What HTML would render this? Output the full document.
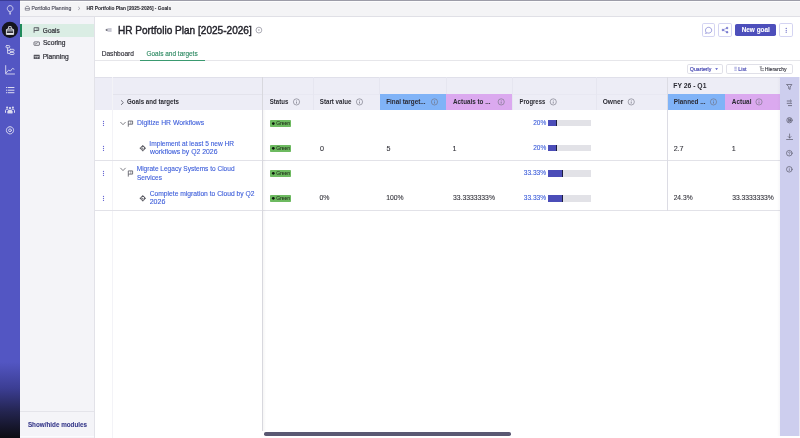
<!DOCTYPE html>
<html><head><meta charset="utf-8">
<style>
*{margin:0;padding:0;box-sizing:border-box}
html,body{width:800px;height:438px;overflow:hidden;background:#fff;font-family:"Liberation Sans",sans-serif;color:#2b2b33}
.a{position:absolute}
.t{position:absolute;white-space:nowrap;line-height:1;transform-origin:0 0}
svg.ov{position:absolute;left:0;top:0}
</style></head><body>
<div id="root" style="position:absolute;left:0;top:0;width:800px;height:438px;will-change:transform">
<div class="a" style="left:0px;top:0px;width:20px;height:438px;background:linear-gradient(to bottom,#5356c3 0,#5356c3 362px,#3c3e94 388px,#23244f 412px,#0c0c12 438px);"></div>
<div class="a" style="left:0px;top:0px;width:20px;height:1px;background:#3a3b96;"></div>
<div class="a" style="left:20px;top:0px;width:780px;height:17px;background:#f4f4f6;border-top:1px solid #9c9ca8;border-bottom:1px solid #e0e0e6"></div>
<div class="a" style="left:20px;top:1px;width:780px;height:1px;background:#fcfcfd;"></div>
<div class="a" style="left:20px;top:17px;width:75px;height:421px;background:#f4f4f8;border-right:1px solid #e2e2e8"></div>
<div class="a" style="left:20px;top:23.5px;width:74px;height:13.3px;background:#daede4;border-left:2px solid #1f8a5b"></div>
<div class="a" style="left:95px;top:17px;width:705px;height:421px;background:#fff;"></div>
<div class="t" style="left:31px;top:6.00px;padding-left:0.395px;font-size:5.31px;color:#50505e;transform:scaleX(0.961);-webkit-text-stroke:0.15px #50505e;">Portfolio Planning</div>
<div class="t" style="left:86px;top:6.00px;padding-left:0.515px;font-size:5.23px;font-weight:bold;color:#25252d;transform:scaleX(0.921);-webkit-text-stroke:0.05px #25252d;">HR Portfolio Plan [2025-2026] - Goals</div>
<div class="t" style="left:42px;top:27.00px;padding-left:0.989px;font-size:7.27px;color:#2e2e36;transform:scaleX(0.887);-webkit-text-stroke:0.2px #2e2e36;">Goals</div>
<div class="t" style="left:42px;top:40.00px;padding-left:0.921px;font-size:6.83px;color:#2e2e36;transform:scaleX(0.977);-webkit-text-stroke:0.2px #2e2e36;">Scoring</div>
<div class="t" style="left:42px;top:54.00px;padding-left:0.622px;font-size:6.40px;color:#2e2e36;transform:scaleX(1.044);-webkit-text-stroke:0.2px #2e2e36;">Planning</div>
<div class="a" style="left:20px;top:410.5px;width:74px;height:1px;background:#e4e4ea;"></div>
<div class="a" style="left:20px;top:436.4px;width:74px;height:1px;background:#fbfbfd;"></div>
<div class="t" style="left:27px;top:421.00px;padding-left:1.091px;font-size:7.56px;font-weight:bold;color:#37398a;transform:scaleX(0.835);-webkit-text-stroke:0.12px #37398a;">Show/hide modules</div>
<div class="t" style="left:117px;top:26.00px;padding-left:1.008px;font-size:10.47px;color:#25252d;transform:scaleX(0.962);-webkit-text-stroke:0.42px #25252d;">HR Portfolio Plan [2025-2026]</div>
<div class="t" style="left:101px;top:50.00px;padding-left:0.776px;font-size:7.85px;color:#2d2d35;transform:scaleX(0.843);-webkit-text-stroke:0.15px #2d2d35;">Dashboard</div>
<div class="t" style="left:146px;top:50.00px;padding-left:0.575px;font-size:7.85px;color:#2e8a63;transform:scaleX(0.827);-webkit-text-stroke:0.15px #2e8a63;">Goals and targets</div>
<div class="a" style="left:95px;top:60.3px;width:705px;height:1px;background:#e6e6ea;"></div>
<div class="a" style="left:140px;top:59.5px;width:64.6px;height:1.6px;background:#3a9a70;"></div>
<div class="a" style="left:702px;top:23.3px;width:13.3px;height:13.5px;background:#fff;border:0.7px solid #d4d4f2;border-radius:1.8px"></div>
<div class="a" style="left:718.3px;top:23.3px;width:13.6px;height:13.5px;background:#fff;border:0.7px solid #d4d4f2;border-radius:1.8px"></div>
<div class="a" style="left:779.3px;top:23.3px;width:13.5px;height:13.5px;background:#fff;border:0.7px solid #d4d4f2;border-radius:1.8px"></div>
<div class="a" style="left:735px;top:23.5px;width:41px;height:12.8px;background:#4d4fbb;border-radius:1.8px"></div>
<div class="t" style="left:741px;top:27.00px;padding-left:0.694px;font-size:6.69px;font-weight:bold;color:#ffffff;transform:scaleX(0.960);-webkit-text-stroke:0.1px #ffffff;">New goal</div>
<div class="a" style="left:686.7px;top:63.65px;width:36.2px;height:10.5px;background:#fff;border:0.7px solid #e0e0e8;border-radius:1.8px"></div>
<div class="a" style="left:726.2px;top:63.65px;width:66.4px;height:10.5px;background:#fff;border:0.7px solid #e0e0e8;border-radius:1.8px"></div>
<div class="t" style="left:689px;top:67.00px;padding-left:0.873px;font-size:5.38px;color:#4042b0;transform:scaleX(0.975);-webkit-text-stroke:0.15px #4042b0;">Quarterly</div>
<div class="t" style="left:738px;top:67.00px;padding-left:0.263px;font-size:5.38px;color:#4042b0;transform:scaleX(0.990);-webkit-text-stroke:0.15px #4042b0;">List</div>
<div class="t" style="left:764px;top:67.00px;padding-left:0.705px;font-size:5.38px;color:#3a3a44;transform:scaleX(0.957);-webkit-text-stroke:0.15px #3a3a44;">Hierarchy</div>
<div class="a" style="left:95px;top:77px;width:685px;height:33px;background:#ededf6;border-top:0.6px solid #e0e0ea"></div>
<div class="a" style="left:112.2px;top:93.6px;width:150px;height:0.8px;background:#e3e3ec;"></div>
<div class="a" style="left:262.5px;top:93.6px;width:517.5px;height:0.7px;background:#e8e8f2;"></div>
<div class="a" style="left:262.2px;top:77px;width:0.7px;height:33px;background:#e6e6f0;"></div>
<div class="t" style="left:269px;top:98.00px;padding-left:0.981px;font-size:7.27px;font-weight:bold;color:#2a2a32;transform:scaleX(0.834);">Status</div>
<div class="a" style="left:313.0px;top:77px;width:0.7px;height:33px;background:#e6e6f0;"></div>
<div class="t" style="left:319px;top:98.00px;padding-left:0.956px;font-size:7.27px;font-weight:bold;color:#2a2a32;transform:scaleX(0.851);">Start value</div>
<div class="a" style="left:379.7px;top:94px;width:66.6px;height:16px;background:#80b3f7;"></div>
<div class="a" style="left:379.4px;top:77px;width:0.7px;height:16.5px;background:#e6e6f0;"></div>
<div class="t" style="left:386px;top:98.00px;padding-left:0.255px;font-size:7.27px;font-weight:bold;color:#2a2a32;transform:scaleX(0.871);">Final target...</div>
<div class="a" style="left:446.3px;top:94px;width:66.3px;height:16px;background:#dba9ef;"></div>
<div class="a" style="left:446.0px;top:77px;width:0.7px;height:16.5px;background:#e6e6f0;"></div>
<div class="t" style="left:453px;top:98.00px;padding-left:0.049px;font-size:7.27px;font-weight:bold;color:#2a2a32;transform:scaleX(0.865);">Actuals to ...</div>
<div class="a" style="left:512.3px;top:77px;width:0.7px;height:33px;background:#e6e6f0;"></div>
<div class="t" style="left:519px;top:98.00px;padding-left:0.738px;font-size:7.27px;font-weight:bold;color:#2a2a32;transform:scaleX(0.814);">Progress</div>
<div class="a" style="left:595.9px;top:77px;width:0.7px;height:33px;background:#e6e6f0;"></div>
<div class="t" style="left:602px;top:98.00px;padding-left:0.807px;font-size:7.27px;font-weight:bold;color:#2a2a32;transform:scaleX(0.911);">Owner</div>
<div class="a" style="left:667px;top:94px;width:58px;height:16px;background:#80b3f7;"></div>
<div class="a" style="left:666.7px;top:77px;width:0.7px;height:16.5px;background:#e6e6f0;"></div>
<div class="t" style="left:673px;top:98.00px;padding-left:0.947px;font-size:7.27px;font-weight:bold;color:#2a2a32;transform:scaleX(0.870);">Planned ...</div>
<div class="a" style="left:725px;top:94px;width:55px;height:16px;background:#dba9ef;"></div>
<div class="t" style="left:731px;top:98.00px;padding-left:0.951px;font-size:7.27px;font-weight:bold;color:#2a2a32;transform:scaleX(0.883);">Actual</div>
<div class="a" style="left:112px;top:77px;width:0.7px;height:361px;background:#f3f3f7;"></div>
<div class="t" style="left:127px;top:98.00px;padding-left:0.004px;font-size:7.27px;font-weight:bold;color:#2a2a32;transform:scaleX(0.847);">Goals and targets</div>
<div class="t" style="left:673px;top:82.00px;padding-left:0.311px;font-size:7.27px;font-weight:bold;color:#2a2a32;transform:scaleX(0.936);">FY 26 - Q1</div>
<div class="a" style="left:95px;top:160px;width:685px;height:0.8px;background:#e2e2e8;"></div>
<div class="a" style="left:95px;top:210.2px;width:685px;height:0.8px;background:#e2e2e8;"></div>
<div class="a" style="left:666.7px;top:77px;width:0.8px;height:134px;background:#dcdce4;"></div>
<div class="a" style="left:261.9px;top:77px;width:1px;height:353.5px;background:#d8d8de;"></div>
<div class="a" style="left:262.9px;top:110px;width:3px;height:320.5px;background:linear-gradient(to right,rgba(0,0,0,0.04),rgba(0,0,0,0));"></div>
<div class="t" style="left:137px;top:119.00px;padding-left:0.042px;font-size:7.41px;color:#3a5bd9;transform:scaleX(0.918);-webkit-text-stroke:0.1px #3a5bd9;">Digitize HR Workflows</div>
<div class="t" style="left:149px;top:141.00px;padding-left:0.405px;font-size:6.90px;color:#3a5bd9;transform:scaleX(0.958);-webkit-text-stroke:0.1px #3a5bd9;">Implement at least 5 new HR</div>
<div class="t" style="left:150px;top:148.00px;padding-left:0.017px;font-size:6.98px;color:#3a5bd9;transform:scaleX(0.984);-webkit-text-stroke:0.1px #3a5bd9;">workflows by Q2 2026</div>
<div class="t" style="left:136px;top:165.00px;padding-left:0.755px;font-size:6.98px;color:#3a5bd9;transform:scaleX(0.939);-webkit-text-stroke:0.1px #3a5bd9;">Migrate Legacy Systems to Cloud</div>
<div class="t" style="left:136px;top:175.00px;padding-left:1.004px;font-size:6.83px;color:#3a5bd9;transform:scaleX(0.953);-webkit-text-stroke:0.1px #3a5bd9;">Services</div>
<div class="t" style="left:149px;top:191.00px;padding-left:0.676px;font-size:6.83px;color:#3a5bd9;transform:scaleX(0.983);-webkit-text-stroke:0.1px #3a5bd9;">Complete migration to Cloud by Q2</div>
<div class="t" style="left:149px;top:199.00px;padding-left:0.633px;font-size:6.88px;color:#3a5bd9;transform:scaleX(1.024);-webkit-text-stroke:0.1px #3a5bd9;">2026</div>
<div class="a" style="left:269.8px;top:120.2px;width:21.7px;height:6.6px;background:#6dba60;border-radius:0.8px"></div>
<div class="t" style="left:276px;top:121.00px;padding-left:0.152px;font-size:5.23px;color:#24301f;transform:scaleX(0.968);-webkit-text-stroke:0.05px #24301f;">Green</div>
<div class="a" style="left:269.8px;top:145.0px;width:21.7px;height:6.6px;background:#6dba60;border-radius:0.8px"></div>
<div class="t" style="left:276px;top:146.00px;padding-left:0.152px;font-size:5.23px;color:#24301f;transform:scaleX(0.968);-webkit-text-stroke:0.05px #24301f;">Green</div>
<div class="a" style="left:269.8px;top:170.0px;width:21.7px;height:6.6px;background:#6dba60;border-radius:0.8px"></div>
<div class="t" style="left:276px;top:171.00px;padding-left:0.152px;font-size:5.23px;color:#24301f;transform:scaleX(0.968);-webkit-text-stroke:0.05px #24301f;">Green</div>
<div class="a" style="left:269.8px;top:195.0px;width:21.7px;height:6.6px;background:#6dba60;border-radius:0.8px"></div>
<div class="t" style="left:276px;top:196.00px;padding-left:0.152px;font-size:5.23px;color:#24301f;transform:scaleX(0.968);-webkit-text-stroke:0.05px #24301f;">Green</div>
<div class="t" style="left:319.88px;top:146.00px;font-size:7.16px;color:#33333b;-webkit-text-stroke:0.1px #33333b;">0</div>
<div class="t" style="left:386.59px;top:146.00px;font-size:7.16px;color:#33333b;-webkit-text-stroke:0.1px #33333b;">5</div>
<div class="t" style="left:452.51px;top:146.00px;font-size:7.16px;color:#33333b;-webkit-text-stroke:0.1px #33333b;">1</div>
<div class="t" style="left:673.64px;top:146.00px;font-size:7.16px;color:#33333b;-webkit-text-stroke:0.1px #33333b;">2.7</div>
<div class="t" style="left:731.81px;top:146.00px;font-size:7.16px;color:#33333b;-webkit-text-stroke:0.1px #33333b;">1</div>
<div class="t" style="left:319px;top:194.00px;padding-left:0.498px;font-size:7.31px;color:#33333b;transform:scaleX(0.949);-webkit-text-stroke:0.1px #33333b;">0%</div>
<div class="t" style="left:386px;top:194.00px;padding-left:0.202px;font-size:7.31px;color:#33333b;transform:scaleX(0.934);-webkit-text-stroke:0.1px #33333b;">100%</div>
<div class="t" style="left:452px;top:194.00px;padding-left:1.012px;font-size:7.31px;color:#33333b;transform:scaleX(0.933);-webkit-text-stroke:0.1px #33333b;">33.3333333%</div>
<div class="t" style="left:673px;top:194.00px;padding-left:0.728px;font-size:7.31px;color:#33333b;transform:scaleX(0.915);-webkit-text-stroke:0.1px #33333b;">24.3%</div>
<div class="t" style="left:732px;top:194.00px;padding-left:0.267px;font-size:7.31px;color:#33333b;transform:scaleX(0.924);-webkit-text-stroke:0.1px #33333b;">33.3333333%</div>
<div class="t" style="left:533px;top:120.00px;padding-left:0.189px;font-size:7.09px;color:#3a5bd9;transform:scaleX(0.919);-webkit-text-stroke:0.1px #3a5bd9;">20%</div>
<div class="a" style="left:548px;top:119.8px;width:43px;height:6.7px;background:#e2e2e7;"></div>
<div class="a" style="left:548px;top:119.8px;width:9px;height:6.7px;background:#4b4db8;border-right:0.8px solid #1d1d40"></div>
<div class="t" style="left:533px;top:145.00px;padding-left:0.189px;font-size:7.09px;color:#3a5bd9;transform:scaleX(0.919);-webkit-text-stroke:0.1px #3a5bd9;">20%</div>
<div class="a" style="left:548px;top:144.8px;width:43px;height:6.7px;background:#e2e2e7;"></div>
<div class="a" style="left:548px;top:144.8px;width:9px;height:6.7px;background:#4b4db8;border-right:0.8px solid #1d1d40"></div>
<div class="t" style="left:523px;top:170.00px;padding-left:0.804px;font-size:7.09px;color:#3a5bd9;transform:scaleX(0.934);-webkit-text-stroke:0.1px #3a5bd9;">33.33%</div>
<div class="a" style="left:548px;top:169.9px;width:43px;height:6.7px;background:#e2e2e7;"></div>
<div class="a" style="left:548px;top:169.9px;width:15px;height:6.7px;background:#4b4db8;border-right:0.8px solid #1d1d40"></div>
<div class="t" style="left:523px;top:195.00px;padding-left:0.804px;font-size:7.09px;color:#3a5bd9;transform:scaleX(0.934);-webkit-text-stroke:0.1px #3a5bd9;">33.33%</div>
<div class="a" style="left:548px;top:194.9px;width:43px;height:6.7px;background:#e2e2e7;"></div>
<div class="a" style="left:548px;top:194.9px;width:15px;height:6.7px;background:#4b4db8;border-right:0.8px solid #1d1d40"></div>
<div class="a" style="left:777px;top:77.3px;width:3px;height:358.5px;background:linear-gradient(to right,rgba(120,120,150,0),rgba(120,120,150,0.06));"></div>
<div class="a" style="left:780px;top:77.3px;width:19.2px;height:358.5px;background:#cdceee;"></div>
<div class="a" style="left:799.2px;top:77.3px;width:0.8px;height:358.5px;background:#e8e8f4;"></div>
<div class="a" style="left:263.7px;top:432.2px;width:247.2px;height:3.6px;background:#5a5872;border-radius:1.8px"></div>
<svg class="ov" width="800" height="438" viewBox="0 0 800 438" fill="none">
<path d="M25.3 10.2 V7.7 L26.4 6.3 H28.3 L29.4 7.7 V10.2 Z M25.3 8.5 H29.4" stroke="#6a6a78" stroke-width="0.7"/>
<path d="M78.2 6.9 L79.9 8.4 L78.2 9.9" stroke="#777784" stroke-width="0.6"/>
<g stroke="#44444c">
  <path d="M34.1 32.8 V27.7 H38.7 V30.5 H34.1" stroke-width="0.8"/>
  <path d="M37.1 27.7 V30.5" stroke-width="0.5"/>
  <rect x="34" y="41.9" width="5.4" height="3.4" rx="0.5" stroke-width="0.75" stroke="#4a4a54"/>
  <path d="M35.1 43.5 L36 44.2 L37.7 42.5" stroke-width="0.65" stroke="#4a4a54"/>
  <rect x="33.7" y="54.8" width="6" height="4.3" rx="0.3" fill="#55555e" stroke="none"/>
  <path d="M34.4 56.5 H39 M35.8 56.5 V58.4 M37.6 56.5 V58.4" stroke="#f4f4f7" stroke-width="0.5"/>
</g>
<path d="M107.3 28.9 L105.7 29.9 L107.3 31 Z" fill="#50505e" stroke="#50505e" stroke-width="0.5" stroke-linejoin="round"/>
<rect x="107.7" y="28.1" width="4" height="3.8" fill="#d0d0da"/>
<path d="M109 28.1 V31.9 M110.4 28.1 V31.9" stroke="#babac6" stroke-width="0.4"/>
<g stroke="#80808e" stroke-width="0.65"><circle cx="258.9" cy="30.1" r="2.9"/><circle cx="258.9" cy="30.1" r="0.75" fill="#9a9aa6" stroke="none"/></g>
<g stroke="#6e70cc" stroke-width="0.65" stroke-linejoin="round">
  <path d="M706.1 32.4 L705.5 33.4 L707.3 32.9 C707.7 33.1 708.1 33.1 708.6 33.1 C710.4 33.1 711.7 31.8 711.7 30.2 C711.7 28.6 710.4 27.3 708.6 27.3 C706.8 27.3 705.5 28.6 705.5 30.2 C705.5 31 705.7 31.8 706.1 32.4 Z"/>
  <circle cx="722.9" cy="30" r="0.85" fill="#6e70cc"/><circle cx="727.1" cy="28" r="0.85" fill="#6e70cc"/><circle cx="727.1" cy="32.2" r="0.85" fill="#6e70cc"/>
  <path d="M723.4 29.7 L726.6 28.2 M723.4 30.3 L726.6 31.9" stroke-width="0.55"/>
</g>
<g fill="#5a5cc0"><circle cx="786.2" cy="28.4" r="0.6"/><circle cx="786.2" cy="30.3" r="0.6"/><circle cx="786.2" cy="32.2" r="0.6"/></g>
<path d="M715.2 68.2 H718 L716.6 70 Z" fill="#4a4cc0"/>
<path d="M734.3 67.3 H736.8 M734.3 68.8 H736.8 M734.3 70.3 H736.8" stroke="#6a6cc8" stroke-width="0.55"/>
<path d="M759.6 66.8 H762 M760.8 66.8 V70.6 H764 M760.8 68.7 H764" stroke="#44444e" stroke-width="0.55"/>
<g stroke="#6e6e7c" stroke-width="0.6"><circle cx="296.5" cy="101.9" r="3.1"/><path d="M296.5 101.5 V103.6" stroke-width="0.7"/><circle cx="296.5" cy="100.4" r="0.4" fill="#6e6e7c" stroke="none"/></g>
<g stroke="#6e6e7c" stroke-width="0.6"><circle cx="359.5" cy="101.9" r="3.1"/><path d="M359.5 101.5 V103.6" stroke-width="0.7"/><circle cx="359.5" cy="100.4" r="0.4" fill="#6e6e7c" stroke="none"/></g>
<g stroke="#6e6e7c" stroke-width="0.6"><circle cx="434.5" cy="101.9" r="3.1"/><path d="M434.5 101.5 V103.6" stroke-width="0.7"/><circle cx="434.5" cy="100.4" r="0.4" fill="#6e6e7c" stroke="none"/></g>
<g stroke="#6e6e7c" stroke-width="0.6"><circle cx="501.2" cy="101.9" r="3.1"/><path d="M501.2 101.5 V103.6" stroke-width="0.7"/><circle cx="501.2" cy="100.4" r="0.4" fill="#6e6e7c" stroke="none"/></g>
<g stroke="#6e6e7c" stroke-width="0.6"><circle cx="553.25" cy="101.9" r="3.1"/><path d="M553.25 101.5 V103.6" stroke-width="0.7"/><circle cx="553.25" cy="100.4" r="0.4" fill="#6e6e7c" stroke="none"/></g>
<g stroke="#6e6e7c" stroke-width="0.6"><circle cx="631.25" cy="101.9" r="3.1"/><path d="M631.25 101.5 V103.6" stroke-width="0.7"/><circle cx="631.25" cy="100.4" r="0.4" fill="#6e6e7c" stroke="none"/></g>
<g stroke="#6e6e7c" stroke-width="0.6"><circle cx="713.5" cy="101.9" r="3.1"/><path d="M713.5 101.5 V103.6" stroke-width="0.7"/><circle cx="713.5" cy="100.4" r="0.4" fill="#6e6e7c" stroke="none"/></g>
<g stroke="#6e6e7c" stroke-width="0.6"><circle cx="759" cy="101.9" r="3.1"/><path d="M759 101.5 V103.6" stroke-width="0.7"/><circle cx="759" cy="100.4" r="0.4" fill="#6e6e7c" stroke="none"/></g>
<path d="M121 100.3 L123.4 102.6 L121 104.9" stroke="#444450" stroke-width="0.7"/>
<g fill="#5050cc"><circle cx="103.5" cy="121.3" r="0.62"/><circle cx="103.5" cy="123.3" r="0.62"/><circle cx="103.5" cy="125.3" r="0.62"/></g>
<g fill="#5050cc"><circle cx="103.5" cy="146.3" r="0.62"/><circle cx="103.5" cy="148.3" r="0.62"/><circle cx="103.5" cy="150.3" r="0.62"/></g>
<g fill="#5050cc"><circle cx="103.5" cy="171.3" r="0.62"/><circle cx="103.5" cy="173.3" r="0.62"/><circle cx="103.5" cy="175.3" r="0.62"/></g>
<g fill="#5050cc"><circle cx="103.5" cy="196.3" r="0.62"/><circle cx="103.5" cy="198.3" r="0.62"/><circle cx="103.5" cy="200.3" r="0.62"/></g>
<path d="M120.4 122.0 L123 124.7 L125.6 122.0" stroke="#55555f" stroke-width="0.75"/>
<path d="M120.4 167.9 L123 170.60000000000002 L125.6 167.9" stroke="#55555f" stroke-width="0.75"/>
<g stroke="#55555f"><path d="M128.3 126.7 V121 H132.6 V124.2 H128.3" stroke-width="0.8"/><path d="M130.8 121 V124.2" stroke-width="0.5"/></g>
<g stroke="#55555f"><path d="M128.3 176.6 V170.9 H132.6 V174.1 H128.3" stroke-width="0.8"/><path d="M130.8 170.9 V174.1" stroke-width="0.5"/></g>
<g stroke="#3a3a44" stroke-width="0.8"><circle cx="142.8" cy="148.2" r="2"/><path d="M142.8 145.1 V146.89999999999998 M142.8 149.5 V151.29999999999998 M139.7 148.2 H141.5 M144.1 148.2 H145.9"/><circle cx="142.8" cy="148.2" r="0.6" fill="#3a3a44" stroke="none"/></g>
<g stroke="#3a3a44" stroke-width="0.8"><circle cx="142.8" cy="198.3" r="2"/><path d="M142.8 195.20000000000002 V197.0 M142.8 199.60000000000002 V201.4 M139.7 198.3 H141.5 M144.1 198.3 H145.9"/><circle cx="142.8" cy="198.3" r="0.6" fill="#3a3a44" stroke="none"/></g>
<circle cx="273.3" cy="123.55" r="1.35" fill="#0e1a0c"/>
<circle cx="273.3" cy="148.35" r="1.35" fill="#0e1a0c"/>
<circle cx="273.3" cy="173.35" r="1.35" fill="#0e1a0c"/>
<circle cx="273.3" cy="198.35" r="1.35" fill="#0e1a0c"/>
<g stroke="#5a5a6c" stroke-width="0.7" stroke-linejoin="round" stroke-linecap="round">
  <path d="M786.9 84.5 H791.9 L790.1 87 V89.4 L788.7 88.7 V87 Z"/>
  <path d="M787.2 101 H790 M787.2 103.3 H791.6 M788.4 105.6 H791.6 M790.3 99.9 L791.5 101 L790.3 102.1" stroke-width="0.8"/>
  <circle cx="789.5" cy="120.2" r="2.7"/><circle cx="789.5" cy="120.2" r="1.2"/>
  <path d="M788.3 118.3 L790.7 122.1 M790.7 118.3 L788.3 122.1" stroke-width="0.5"/>
  <path d="M789.6 134 V138 M788.2 136.6 L789.6 138 L791 136.6 M786.6 139.5 H792.6"/>
  <circle cx="789.3" cy="153.2" r="2.8"/><path d="M788.5 152.5 C788.5 151.6 790.2 151.6 790.2 152.5 C790.2 153.2 789.3 153.2 789.3 154" stroke-width="0.6"/><circle cx="789.3" cy="154.9" r="0.3" fill="#5a5a6c" stroke="none"/>
  <circle cx="789.3" cy="169.3" r="2.8"/><path d="M789.3 168.9 V170.7" stroke-width="0.6"/><circle cx="789.3" cy="167.9" r="0.3" fill="#5a5a6c" stroke="none"/>
</g>
<g stroke="#d4d4ee" stroke-linecap="round" stroke-linejoin="round">
  <path d="M8.6 11 C7.6 10.4 7.3 9.5 7.3 8.5 C7.3 6.9 8.5 5.6 10.1 5.6 C11.7 5.6 12.9 6.9 12.9 8.5 C12.9 9.5 12.6 10.4 11.6 11 L10.9 11.7 H9.3 Z" stroke-width="0.95"/>
  <path d="M10.1 12.2 V14.4" stroke-width="1.5" stroke-linecap="butt"/>
</g>
<circle cx="9.9" cy="29.8" r="8.1" fill="#15151f"/>
<g stroke-linejoin="round">
  <path d="M6.4 34.4 V29.6 L8.6 28.5 V26.7 H11.2 V28.5 L13.6 29.6 V34.4 Z" fill="#8e8e9a" stroke="#e6e6ec" stroke-width="0.95"/>
  <rect x="8.9" y="27.2" width="1.9" height="1" fill="#15151f"/>
  <rect x="6.9" y="31.6" width="6.2" height="1.3" fill="#15151f"/>
  <rect x="6.9" y="32.9" width="6.2" height="1.1" fill="#e6e6ec"/>
</g>

<g stroke="#dcdcf0" stroke-width="0.9" stroke-linecap="round" stroke-linejoin="round">
  <rect x="6" y="45.6" width="3.7" height="2.2" rx="0.8"/>
  <rect x="9.7" y="49.3" width="4.4" height="2.1" rx="0.9"/>
  <rect x="9.7" y="52.4" width="4.4" height="2.1" rx="0.9"/>
  <path d="M7.6 47.8 V53.4 H9.7 M7.6 50.3 H9.7"/>
  <path d="M5.7 65.6 V74 H14.5 M6.4 72.6 L8.5 70.2 L10.5 71 L12.5 68.4 L14 69.1"/>
  <path d="M8.1 87.5 H14 M8.1 90.2 H14 M8.1 92.7 H14 M6.4 87.5 H6.6 M6.4 90.2 H6.6 M6.4 92.7 H6.6" stroke-width="1"/>
  <path d="M5.5 112.4 V110.6 C5.5 109.7 6.2 109.3 7.1 109.3 C7.9 109.3 8.5 109.6 8.7 110.2 M14.5 112.4 V110.6 C14.5 109.7 13.8 109.3 12.9 109.3 C12.1 109.3 11.5 109.6 11.3 110.2" stroke-width="1"/>
  <path d="M7.7 112.9 V111.6 C7.7 110.6 8.7 110.1 10 110.1 C11.3 110.1 12.3 110.6 12.3 111.6 V112.9 Z" fill="#dcdcf0" stroke-width="0.6"/>
  <circle cx="7.1" cy="107.6" r="1.05" fill="#dcdcf0" stroke="none"/><circle cx="12.9" cy="107.6" r="1.05" fill="#dcdcf0" stroke="none"/><circle cx="10" cy="108.1" r="1.15" fill="#dcdcf0" stroke="none"/>
  <circle cx="10" cy="130.3" r="3.6" stroke-dasharray="1.6 0.5"/><circle cx="10" cy="130.3" r="1.4"/>
</g>
</svg>
</div></body></html>
